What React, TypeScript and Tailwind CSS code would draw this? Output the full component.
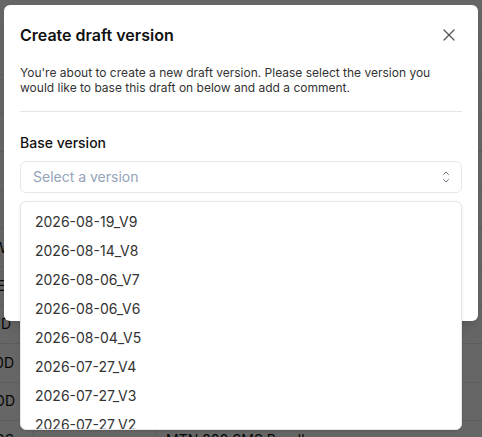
import { X } from 'lucide-react';

const versions = [
  '2026-08-19_V9',
  '2026-08-14_V8',
  '2026-08-06_V7',
  '2026-08-06_V6',
  '2026-08-04_V5',
  '2026-07-27_V4',
  '2026-07-27_V3',
  '2026-07-27_V2',
  '2026-07-20_V1',
];

// rows of the bundle table that sits behind the dialog
const rows = [
  { code: '', name: 'Bundle name', pad: 'pr-[18px]' },
  { code: '', name: 'MTN 1GB Daily', pad: 'pr-[18px]' },
  { code: '', name: 'MTN 2GB Weekly', pad: 'pr-[18px]' },
  { code: '', name: 'MTN 50 Min Voice', pad: 'pr-[18px]' },
  { code: '', name: 'MTN 100 Min Voice', pad: 'pr-[18px]' },
  { code: 'VOICE_NEW', name: 'MTN Voice New', pad: 'pr-[26px]' },
  { code: 'SMS_WEEI', name: 'MTN SMS Weekly', pad: 'pr-[24px]' },
  { code: 'DATA_HD', name: 'MTN Data HD', pad: 'pr-[22px]' },
  { code: 'DATA_0D', name: 'MTN Data Daily', pad: 'pr-[19px]' },
  { code: 'VOICE_DDD', name: 'MTN Voice Daily', pad: 'pr-[18px]' },
  { code: 'SMS_200OS', name: 'MTN 200 SMS Bundle', pad: 'pr-[19px]' },
];

function SortIcon() {
  return (
    <svg width="8" height="14" viewBox="0 0 8 14" fill="none" className="text-gray-500">
      <path d="M1.5 4.5 4 2l2.5 2.5" stroke="currentColor" strokeWidth="1" strokeLinecap="round" strokeLinejoin="round" />
      <path d="M1.5 9.5 4 12l2.5-2.5" stroke="currentColor" strokeWidth="1" strokeLinecap="round" strokeLinejoin="round" />
    </svg>
  );
}

export default function App() {
  return (
    <div className="relative w-full h-[437px] overflow-hidden bg-white font-['Inter',sans-serif]">
      {/* page content */}
      <div className="pt-[37px] text-sm text-[#111]">
        {rows.map((r) => (
          <div key={r.name} className="flex h-[38.4px] border-b border-[#e5e7eb]">
            <div className={`w-[34px] flex items-center justify-end overflow-hidden border-r border-[#e5e7eb] ${r.pad}`}>
              <span className="whitespace-nowrap">{r.code}</span>
            </div>
            <div className="w-[122px] border-r border-[#e5e7eb]" />
            <div className="flex items-center pl-[10px] whitespace-nowrap">{r.name}</div>
          </div>
        ))}
      </div>

      {/* dialog backdrop */}
      <div className="absolute inset-0 bg-black/60" />

      {/* dialog */}
      <div className="absolute left-[4px] top-[5px] w-[474px] h-[316px] bg-white rounded-md px-4 pt-[18px] shadow-lg">
        <div className="flex items-center justify-between">
          <h2 className="text-base leading-6 font-semibold text-[#111]">Create draft version</h2>
          <button className="text-[#555] mr-[3px]">
            <X size={20} strokeWidth={1.5} />
          </button>
        </div>
        <p className="mt-[18px] text-xs leading-[15px] text-[#333]">
          You're about to create a new draft version. Please select the version you would like to base this draft on below and add a comment.
        </p>
        <div className="mt-[16px] h-px bg-[#e5e5e5]" />

        <label className="block mt-[21px] text-sm leading-5 font-medium text-[#111]">Base version</label>
        <div className="relative mt-2">
          <div className="h-8 flex items-center justify-between border border-[#e5e7eb] rounded-md pl-3 pr-[11px] text-sm text-[#94a3b8]">
            <span>Select a version</span>
            <SortIcon />
          </div>

          {/* open select menu */}
          <div className="absolute left-0 right-0 top-full mt-2 z-10 h-[229px] overflow-hidden bg-white border border-[#e5e7eb] rounded-md p-1 pt-[5px] shadow-sm">
            {versions.map((v) => (
              <div key={v} className="h-[29px] flex items-center px-2.5 text-sm text-[#333] rounded-sm">
                {v}
              </div>
            ))}
          </div>
        </div>

        <label className="block mt-5 text-sm leading-5 font-medium text-[#111]">Comment</label>
        <textarea className="mt-2 w-full h-16 border border-[#e5e7eb] rounded-md px-3 py-2 text-sm resize-none" />
      </div>
    </div>
  );
}
